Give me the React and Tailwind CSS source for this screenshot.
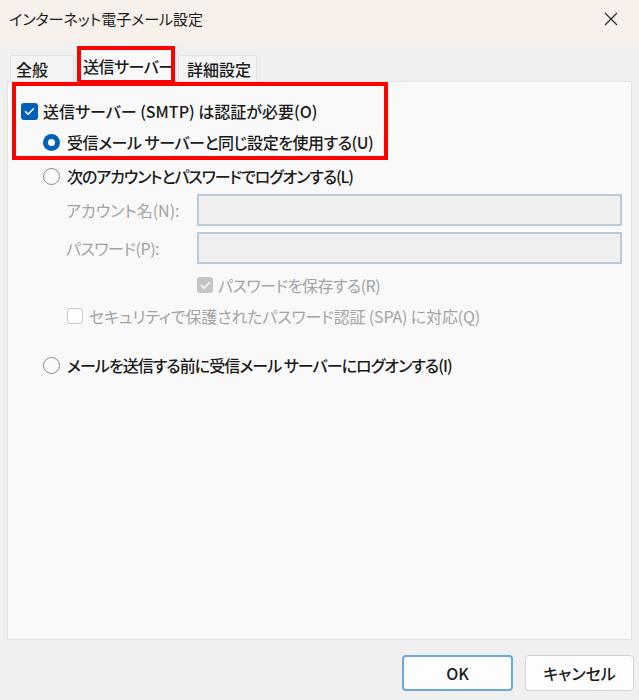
import React from "react";

const font = "font-['Noto_Sans_CJK_JP','Noto_Sans',sans-serif] [font-feature-settings:'palt']";

function CheckBox({ checked, disabled, size = "w-[17px] h-[17px]" }) {
  if (checked) {
    return (
      <span
        className={`${size} shrink-0 rounded-[3px] flex items-center justify-center ${
          disabled ? "bg-[#c5c5c5]" : "bg-[#005fb8]"
        }`}
      >
        <svg width="11" height="9" viewBox="0 0 11 9" fill="none">
          <path d="M1.5 4.6L4.2 7.2L9.5 1.8" stroke="white" strokeWidth="1.5" strokeLinecap="round" strokeLinejoin="round" />
        </svg>
      </span>
    );
  }
  return <span className={`${size} shrink-0 rounded-[3px] border border-[#c9c9c9] bg-white`} />;
}

function Radio({ selected }) {
  if (selected) {
    return (
      <span className="w-[17px] h-[17px] shrink-0 rounded-full bg-[#005fb8] flex items-center justify-center">
        <span className="w-[7px] h-[7px] rounded-full bg-white" />
      </span>
    );
  }
  return <span className="w-[17px] h-[17px] shrink-0 rounded-full border-[1.5px] border-[#8a8a8a] bg-[#f9f9f9]" />;
}

export default function App() {
  return (
    <div className={`relative w-[639px] h-[700px] bg-[#f0f0f0] flex flex-col overflow-hidden ${font}`}>
      {/* Title bar */}
      <div className="h-[42px] bg-[#f8f0ea] flex items-center justify-between pl-[9px] pr-[21px] shrink-0">
        <span className="text-[15px] text-[#1b1b1b] -mt-[4px]">インターネット電子メール設定</span>
        <svg width="14" height="14" viewBox="0 0 14 14" className="-mt-[4px]">
          <path d="M1 1L13 13M13 1L1 13" stroke="#2b2b2b" strokeWidth="1.2" />
        </svg>
      </div>

      {/* Tabs + panel */}
      <div className="px-[7px] pt-[4px] shrink-0">
        <div className="flex items-end h-[35px] pl-[3px] gap-[4px] font-medium">
          <div className="w-[64px] h-[26px] bg-[#f4f4f4] border border-b-0 border-[#e3e3e3] pl-[5px] text-[16px] leading-[26px] text-[#1b1b1b]">
            全般
          </div>
          <div className="relative z-10 -mb-px w-[96px] h-[35px] bg-[#f9f9f9] border border-b-0 border-[#e3e3e3] pl-[4px] pt-[5px] text-[16px] leading-[26px] text-[#1b1b1b] whitespace-nowrap tracking-[-0.5px]">
            送信サーバー
          </div>
          <div className="w-[79px] h-[26px] bg-[#f4f4f4] border border-b-0 border-[#e3e3e3] pl-[8px] text-[16px] leading-[26px] text-[#1b1b1b] whitespace-nowrap">
            詳細設定
          </div>
        </div>

        <div className="h-[559px] bg-[#f9f9f9] border border-[#e3e3e3] pl-[13px] pt-[17px] text-[16px] text-[#1b1b1b]">
          <div className="flex items-center h-[24px] gap-[5px] font-medium">
            <CheckBox checked />
            <span className="whitespace-nowrap">送信サーバー (SMTP) は認証が必要(O)</span>
          </div>
          <div className="flex items-center h-[24px] mt-[7px] ml-[22px] gap-[7px] font-medium">
            <Radio selected />
            <span className="whitespace-nowrap tracking-[-0.45px]">受信メール サーバーと同じ設定を使用する(U)</span>
          </div>
          <div className="flex items-center h-[24px] mt-[10px] ml-[22px] gap-[7px] font-medium">
            <Radio />
            <span className="whitespace-nowrap tracking-[-1.1px]">次のアカウントとパスワードでログオンする(L)</span>
          </div>

          <div className="flex items-center mt-[6px] ml-[45px] text-[#a3a3a3]">
            <span className="w-[131px] whitespace-nowrap">アカウント名(N):</span>
            <div className="w-[425px] h-[32px] bg-[#f0f0f0] border-2 border-[#bccade]" />
          </div>
          <div className="flex items-center mt-[6px] ml-[45px] text-[#a3a3a3]">
            <span className="w-[131px] whitespace-nowrap tracking-[-0.5px]">パスワード(P):</span>
            <div className="w-[425px] h-[32px] bg-[#f0f0f0] border-2 border-[#bccade]" />
          </div>

          <div className="flex items-center h-[24px] mt-[9px] ml-[176px] gap-[5px] text-[#a3a3a3]">
            <CheckBox checked disabled size="w-[16px] h-[16px]" />
            <span className="whitespace-nowrap tracking-[-0.5px]">パスワードを保存する(R)</span>
          </div>
          <div className="flex items-center h-[24px] mt-[7px] ml-[46px] gap-[6px] text-[#a3a3a3]">
            <CheckBox size="w-[16px] h-[16px]" />
            <span className="whitespace-nowrap tracking-[-0.15px]">セキュリティで保護されたパスワード認証 (SPA) に対応(Q)</span>
          </div>

          <div className="flex items-center h-[24px] mt-[25px] ml-[22px] gap-[7px] font-medium">
            <Radio />
            <span className="whitespace-nowrap tracking-[-0.95px]">メールを送信する前に受信メール サーバーにログオンする(I)</span>
          </div>
        </div>
      </div>

      {/* Buttons */}
      <div className="flex justify-end gap-[12px] pr-[5px] pt-[15px] font-medium">
        <button className="w-[111px] h-[36px] rounded-[4px] bg-[#fdfdfd] border-2 border-[#6aa7e3] text-[16px] text-[#1b1b1b]">
          OK
        </button>
        <button className="w-[109px] h-[36px] rounded-[4px] bg-[#fdfdfd] border border-[#d3d3d3] text-[16px] text-[#1b1b1b]">
          キャンセル
        </button>
      </div>

      {/* Annotation boxes */}
      <div className="absolute left-[77px] top-[46px] w-[98px] h-[38px] border-[4px] border-[#ff0000] z-20" />
      <div className="absolute left-[12px] top-[82px] w-[376px] h-[78px] border-[4px] border-[#ff0000] z-20" />
    </div>
  );
}
